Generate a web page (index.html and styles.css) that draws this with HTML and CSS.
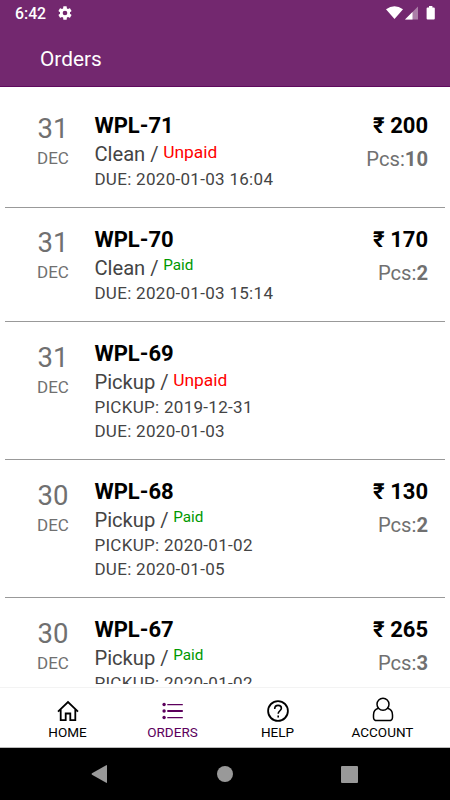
FILE: index.html
```html
<!doctype html>
<html lang="en">
<head>
<meta charset="utf-8">
<title>Orders</title>
<link rel="stylesheet" href="styles.css">
</head>

<body>
	<header class="header">
		<div class="statusBar">
			<span class="clock">6:42</span>
			<svg class="gear" width="16" height="16" viewBox="0 0 24 24"><path fill="#fff" d="M19.43 12.98c.04-.32.07-.64.07-.98s-.03-.66-.07-.98l2.11-1.65c.19-.15.24-.42.12-.64l-2-3.46c-.12-.22-.39-.3-.61-.22l-2.49 1c-.52-.4-1.08-.73-1.69-.98l-.38-2.65A.49.49 0 0 0 14 2h-4c-.25 0-.46.18-.49.42l-.38 2.65c-.61.25-1.17.59-1.69.98l-2.49-1c-.23-.09-.49 0-.61.22l-2 3.46c-.13.22-.07.49.12.64l2.11 1.65c-.04.32-.07.65-.07.98s.03.66.07.98l-2.11 1.65c-.19.15-.24.42-.12.64l2 3.46c.12.22.39.3.61.22l2.49-1c.52.4 1.08.73 1.69.98l.38 2.65c.03.24.24.42.49.42h4c.25 0 .46-.18.49-.42l.38-2.65c.61-.25 1.17-.59 1.69-.98l2.49 1c.23.09.49 0 .61-.22l2-3.46c.12-.22.07-.49-.12-.64zM12 15.5a3.5 3.5 0 1 1 0-7 3.5 3.5 0 0 1 0 7z"/></svg>
			<svg class="signals" width="52" height="16" viewBox="0 0 52 16">
				<path fill="#fff" d="M0 4.2Q8.500 -1.600 17 4.2L8.500 14z"/>
				<path fill="#fff" opacity=".4" d="M19 14.5L32 1.5v13z"/>
				<path fill="#fff" d="M19 14.5L26.500 7v7.5z"/>
				<path fill="#fff" d="M43 1h3.4v1.4h1.4q1 0 1 1v10.2q0 1-1 1h-6.200q-1 0-1-1V3.4q0-1 1-1H43z"/>
			</svg>
		</div>
		<h1 class="title">Orders</h1>
	</header>

	<main class="orders">
		<section class="order">
			<div class="date"><div class="day">31</div><div class="month">DEC</div></div>
			<div class="details">
				<h2 class="code">WPL-71</h2>
				<div class="state">Clean / <span class="unpaid">Unpaid</span></div>
				<div class="when">DUE: 2020-01-03 16:04</div>
			</div>
			<div class="amount"><div class="price">₹ 200</div><div class="pcs">Pcs:<b>10</b></div></div>
		</section>

		<section class="order">
			<div class="date"><div class="day">31</div><div class="month">DEC</div></div>
			<div class="details">
				<h2 class="code">WPL-70</h2>
				<div class="state">Clean / <span class="paid">Paid</span></div>
				<div class="when">DUE: 2020-01-03 15:14</div>
			</div>
			<div class="amount"><div class="price">₹ 170</div><div class="pcs">Pcs:<b>2</b></div></div>
		</section>

		<section class="order">
			<div class="date"><div class="day">31</div><div class="month">DEC</div></div>
			<div class="details">
				<h2 class="code">WPL-69</h2>
				<div class="state">Pickup / <span class="unpaid">Unpaid</span></div>
				<div class="when">PICKUP: 2019-12-31</div>
				<div class="when">DUE: 2020-01-03</div>
			</div>
		</section>

		<section class="order">
			<div class="date"><div class="day">30</div><div class="month">DEC</div></div>
			<div class="details">
				<h2 class="code">WPL-68</h2>
				<div class="state">Pickup / <span class="paid">Paid</span></div>
				<div class="when">PICKUP: 2020-01-02</div>
				<div class="when">DUE: 2020-01-05</div>
			</div>
			<div class="amount"><div class="price">₹ 130</div><div class="pcs">Pcs:<b>2</b></div></div>
		</section>

		<section class="order">
			<div class="date"><div class="day">30</div><div class="month">DEC</div></div>
			<div class="details">
				<h2 class="code">WPL-67</h2>
				<div class="state">Pickup / <span class="paid">Paid</span></div>
				<div class="when">PICKUP: 2020-01-02</div>
			</div>
			<div class="amount"><div class="price">₹ 265</div><div class="pcs">Pcs:<b>3</b></div></div>
		</section>
	</main>

	<nav class="tabs">
		<a class="tab">
			<svg width="26" height="26" viewBox="0 0 26 26" fill="none" stroke="#000" stroke-width="1.8"><path d="M3 13.6L13 4l10 9.6M5.7 11.6v10.5h5v-6.6h4.6v6.6h5V11.6"/></svg>
			HOME
		</a>
		<a class="tab active">
			<svg width="26" height="26" viewBox="0 0 26 26" fill="#5c005c"><circle cx="4.1" cy="6.5" r="1.7"/><circle cx="4.1" cy="13" r="1.7"/><circle cx="4.1" cy="19.5" r="1.7"/><path d="M7.3 5.9h15.5v1.3H7.3zM7.3 12.1h15.5v1.8H7.3zM7.3 18.9h15.5v1.3H7.3z"/></svg>
			ORDERS
		</a>
		<a class="tab">
			<svg width="26" height="26" viewBox="0 0 26 26" fill="none" stroke="#000" stroke-width="1.8"><circle cx="13" cy="13" r="9.9"/><path stroke-width="1.6" d="M9.7 10.9c0-2.2 1.4-3.5 3.4-3.5s3.3 1.2 3.3 2.9c0 2.4-3.2 2.6-3.2 5.5M13.2 17.6v1.9"/></svg>
			HELP
		</a>
		<a class="tab">
			<svg width="26" height="26" viewBox="0 0 26 26" fill="none" stroke="#000" stroke-width="1.5"><circle cx="13" cy="6.2" r="6"/><path d="M8.6 10.3C5 11 3.5 13.5 3.5 17v2.2q0 3.4 3.4 3.4h12.2q3.4 0 3.4-3.4V17c0-3.5-1.5-6-5.1-6.7"/></svg>
			ACCOUNT
		</a>
	</nav>

	<footer class="navBar">
		<svg width="18" height="20" viewBox="0 0 18 20"><path fill="#999" d="M1 9.3L15.2 1.2q.8-.4.8.5v16.6q0 .9-.8.5L1 10.7q-1-.7 0-1.4z"/></svg>
		<span class="homeButton"></span>
		<span class="recentButton"></span>
	</footer>
</body>
</html>
```
FILE: styles.css
```css
body {
	margin: 0;
	height: 800px;
	display: flex;
	flex-direction: column;
	overflow: hidden;
	background-color: #fff;
	font-family: Roboto, sans-serif;
}

.header {
	height: 87px;
	box-sizing: border-box;
	background-color: #73286f;
	border-bottom: 1px solid #5f0a5e;
	color: #fff;
}

.statusBar {
	display: flex;
	align-items: center;
	height: 27px;
	padding: 0 12.5px 0 15px;
}

.clock {
	width: 42px;
	font-size: 15.8px;
	font-weight: 500;
	line-height: 28px;
}

.gear {
	margin-top: -1px;
}

.signals {
	margin: -2px 0 0 auto;
}

.title {
	margin: 16px 0 0 40px;
	font-size: 20.8px;
	font-weight: normal;
	line-height: 32px;
}

.orders {
	height: 590px;
	padding: 6.5px 5px 0;
	overflow: hidden;
}

.order {
	display: flex;
	padding: 18px 17px 15.2px 27px;
	border-bottom: 1px solid #999;
}

.date {
	width: 42px;
	margin-right: 20.4px;
	padding-top: 1.8px;
	text-align: center;
	color: #707070;
}

.day {
	font-size: 27.5px;
	line-height: 32px;
}

.month {
	font-size: 17px;
	line-height: 27px;
}

.details {
	flex: 1;
	color: #444;
}

.code {
	margin: 0;
	color: #000;
	font-size: 22px;
	line-height: 28px;
}

.state {
	height: 27px;
	font-size: 20.2px;
	line-height: 28px;
	white-space: nowrap;
}

.unpaid, .paid {
	display: inline-block;
	margin-left: -0.5px;
	line-height: 20px;
	vertical-align: 3px;
}

.unpaid {
	color: #f00;
	font-size: 17.4px;
}

.paid {
	color: #090;
	font-size: 15.3px;
	vertical-align: 5px;
}

.when {
	font-size: 17px;
	line-height: 24px;
	letter-spacing: 0.3px;
}

.when:last-child {
	padding-bottom: 1px;
}

.amount {
	text-align: right;
}

.price {
	font-size: 22px;
	font-weight: bold;
	line-height: 28px;
}

.pcs {
	color: #707070;
	font-size: 20.2px;
	line-height: 39px;
	height: 28px;
}

.tabs {
	display: flex;
	height: 61px;
	margin-top: 3.5px;
	padding: 0 15px;
	border-top: 1px solid #f3f3f3;
	border-bottom: 1px solid #bbb;
	box-sizing: border-box;
}

.tab {
	flex: 1;
	display: flex;
	flex-direction: column;
	align-items: center;
	padding-top: 10px;
	font-size: 13.5px;
	line-height: 17px;
}

.tab svg {
	overflow: visible;
}

.active {
	color: #5c005c;
}

.navBar {
	display: flex;
	flex: 1;
	align-items: center;
	justify-content: space-between;
	padding: 0 92px 0 91px;
	background-color: #000;
}

.homeButton {
	width: 16px;
	height: 16px;
	border-radius: 50%;
	background-color: #999;
}

.recentButton {
	width: 17px;
	height: 17px;
	border-radius: 1px;
	background-color: #999;
}
```
